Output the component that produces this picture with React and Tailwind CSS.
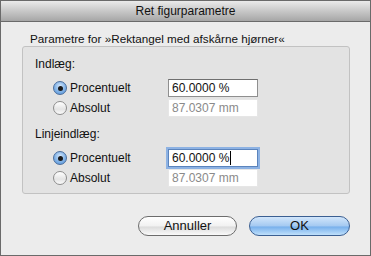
import React from "react";

const Radio = ({ checked }) =>
  checked ? (
    <span className="w-[14px] h-[14px] rounded-full border border-[#4a6d9c] bg-[radial-gradient(circle_at_50%_35%,#d6e8fb_0%,#8fbbea_45%,#4d8fd8_100%)] flex items-center justify-center shrink-0">
      <span className="w-[5px] h-[5px] rounded-full bg-[#1a1a1a]" />
    </span>
  ) : (
    <span className="w-[14px] h-[14px] rounded-full border border-[#8d8d8d] bg-[linear-gradient(to_bottom,#ffffff,#e4e4e4_60%,#fbfbfb)] shrink-0" />
  );

const Row = ({ checked, label, value, disabled, focused }) => (
  <div className="flex items-center h-[18px] pl-[18px]">
    <Radio checked={checked} />
    <span className="ml-[3px] w-[98px] text-[12px] text-[#111]">{label}</span>
    <div
      className={`w-[90px] h-[18px] bg-white flex items-center pl-[3px] text-[12px] ${
        disabled
          ? "border border-[#e6e6e6] text-[#8a8a8a]"
          : focused
          ? "border border-[#5b84bd] shadow-[0_0_0_2px_#8db2e3] text-[#111]"
          : "border border-[#8f8f8f] border-t-[#6f6f6f] text-[#111]"
      }`}
    >
      {value}
      {focused && <span className="w-px h-[14px] bg-black ml-[1px]" />}
    </div>
  </div>
);

export default function App() {
  return (
    <div className="w-[371px] h-[256px] bg-[#ececec] border border-[#6a6a6a] flex flex-col font-['Liberation_Sans',Arial,sans-serif]">
      <div className="h-[21px] shrink-0 border-b border-[#6a6a6a] bg-[linear-gradient(to_bottom,#ebebeb,#c8c8c8_50%,#a6a6a6)] flex items-center justify-center text-[12px] text-[#111]">
        Ret figurparametre
      </div>

      <div className="pl-[21px] pt-[10px]">
        <div className="pl-[8px] h-[14px] leading-[14px] text-[11.7px] text-[#111]">
          Parametre for »Rektangel med afskårne hjørner«
        </div>

        <div className="w-[328px] h-[148px] border border-[#c2c2c2] bg-[#e3e3e3] rounded-[3px] pl-[12px] pt-[10px] flex flex-col">
          <div className="h-[14px] leading-[14px] text-[12px] text-[#111]">Indlæg:</div>
          <div className="mt-[8px] flex flex-col gap-[2px]">
            <Row checked label="Procentuelt" value="60.0000 %" />
            <Row label="Absolut" value="87.0307 mm" disabled />
          </div>

          <div className="mt-[10px] h-[14px] leading-[14px] text-[12px] text-[#111]">Linjeindlæg:</div>
          <div className="mt-[8px] flex flex-col gap-[2px]">
            <Row checked label="Procentuelt" value="60.0000 %" focused />
            <Row label="Absolut" value="87.0307 mm" disabled />
          </div>
        </div>

        <div className="w-[328px] mt-[22px] flex justify-end gap-[12px]">
          <button className="w-[99px] h-[20px] rounded-full border border-[#6c6c6c] bg-[linear-gradient(to_bottom,#ffffff,#f1f1f1_50%,#dcdcdc_55%,#fafafa)] text-[13px] text-[#111] flex items-center justify-center">
            Annuller
          </button>
          <button className="w-[101px] h-[20px] rounded-full border border-[#3b5f92] bg-[linear-gradient(to_bottom,#d2e6fb,#a4c9f1_50%,#78b0ec_55%,#bfe0fb)] text-[13px] text-[#111] flex items-center justify-center">
            OK
          </button>
        </div>
      </div>
    </div>
  );
}
